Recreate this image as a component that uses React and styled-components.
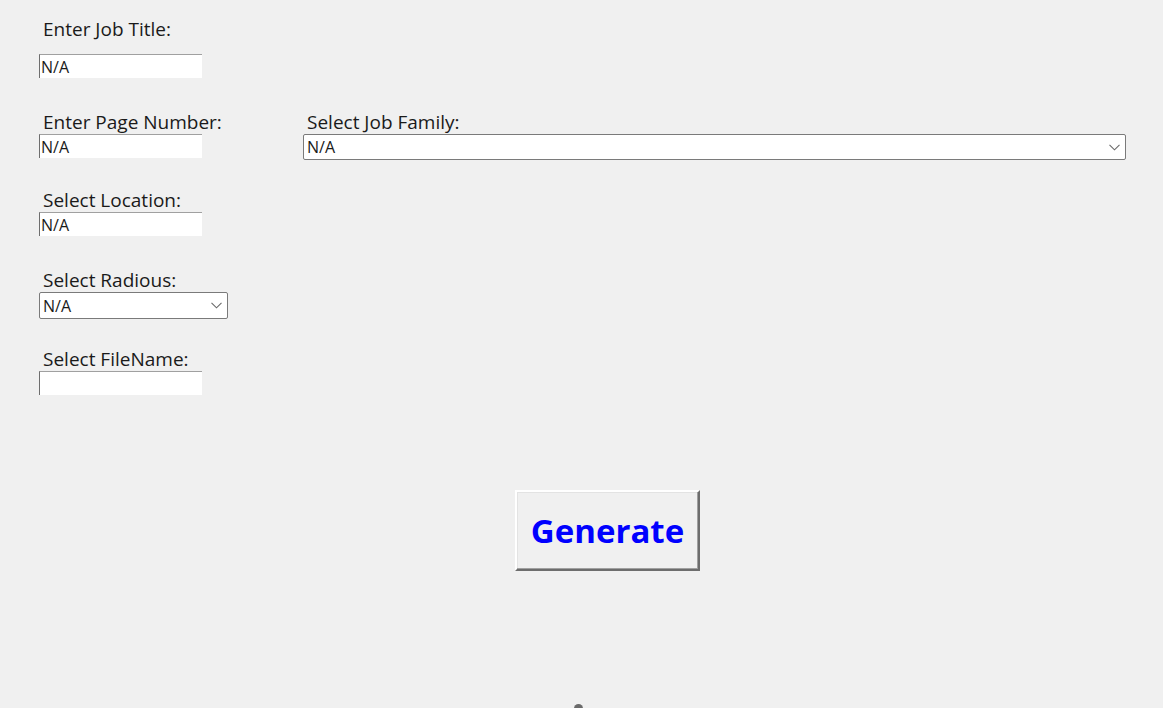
import React from 'react';
import styled, { createGlobalStyle } from 'styled-components';

const GlobalStyle = createGlobalStyle`
  html, body {
    margin: 0;
    padding: 0;
    background: #f0f0f0;
    overflow: hidden;
  }
  body {
    font-family: 'Open Sans', 'Noto Sans', sans-serif;
    color: #1a1a1a;
  }
`;

const Form = styled.div`
  display: flex;
  flex-direction: column;
  align-items: flex-start;
  padding: 17px 0 0 39px;
  height: 708px;
  box-sizing: border-box;
  > * {
    flex-shrink: 0;
  }
`;

const Row = styled.div`
  display: flex;
  align-items: flex-start;
  margin-top: ${(p) => p.top || 0}px;
`;

const Field = styled.div`
  display: flex;
  flex-direction: column;
  width: ${(p) => (p.width ? `${p.width}px` : 'auto')};
`;

const Label = styled.label`
  display: block;
  padding-left: 4px;
  font-size: 19px;
  line-height: 25px;
  height: 22px;
  margin-bottom: ${(p) => p.gap || 2}px;
  white-space: nowrap;
`;

const Entry = styled.input`
  box-sizing: border-box;
  width: 163px;
  height: 24px;
  margin: 0;
  padding: 0 0 0 1px;
  background: #fff;
  border: none;
  border-top: 1px solid #a0a0a0;
  border-left: 1px solid #6e6e6e;
  font-family: 'Open Sans', 'Noto Sans', sans-serif;
  font-size: 16px;
  color: #1a1a1a;
  outline: none;
`;

const Combo = styled.div`
  box-sizing: border-box;
  display: flex;
  align-items: center;
  width: ${(p) => p.width}px;
  height: ${(p) => p.height || 27}px;
  padding-left: 3px;
  background: #fff;
  border: 1px solid #7a7a7a;
  border-radius: 2px;
  font-size: 16px;
  color: #1a1a1a;
`;

const Chevron = styled.svg`
  margin-left: auto;
  margin-right: 5px;
  width: 11px;
  height: 7px;
`;

const GenerateButton = styled.button`
  box-sizing: border-box;
  width: 185px;
  height: 81px;
  margin: 95px 0 0 476px;
  background: #f0f0f0;
  border: 2px solid;
  border-color: #ffffff #6d6d6d #6d6d6d #ffffff;
  box-shadow: inset -1px -1px 0 #a0a0a0, inset 1px 1px 0 #e3e3e3;
  font-family: 'Open Sans', 'Noto Sans', sans-serif;
  font-weight: 700;
  font-size: 33px;
  color: #0000ff;
  padding: 0;
  cursor: pointer;
`;

const Knob = styled.div`
  width: 9px;
  height: 9px;
  border-radius: 50%;
  background: #6a6a6a;
  margin: 133px 0 0 535px;
`;

const ComboBox = ({ value, width, height }) => (
  <Combo width={width} height={height}>
    <span>{value}</span>
    <Chevron viewBox="0 0 11 7">
      <path d="M0.5 0.8 L5.5 5.8 L10.5 0.8" fill="none" stroke="#6a6a6a" strokeWidth="1.1" />
    </Chevron>
  </Combo>
);

const App = () => {
  return (
    <>
      <GlobalStyle />
      <Form>
        <Field>
          <Label gap={15}>Enter Job Title:</Label>
          <Entry defaultValue="N/A" />
        </Field>

        <Row top={32}>
          <Field width={264}>
            <Label>Enter Page Number:</Label>
            <Entry defaultValue="N/A" />
          </Field>
          <Field>
            <Label>Select Job Family:</Label>
            <ComboBox value="N/A" width={823} height={26} />
          </Field>
        </Row>

        <Row top={28}>
          <Field>
            <Label>Select Location:</Label>
            <Entry defaultValue="N/A" />
          </Field>
        </Row>

        <Row top={32}>
          <Field>
            <Label>Select Radious:</Label>
            <ComboBox value="N/A" width={189} height={27} />
          </Field>
        </Row>

        <Row top={28}>
          <Field>
            <Label>Select FileName:</Label>
            <Entry defaultValue="" />
          </Field>
        </Row>

        <GenerateButton>Generate</GenerateButton>
        <Knob />
      </Form>
    </>
  );
};

export default App;
